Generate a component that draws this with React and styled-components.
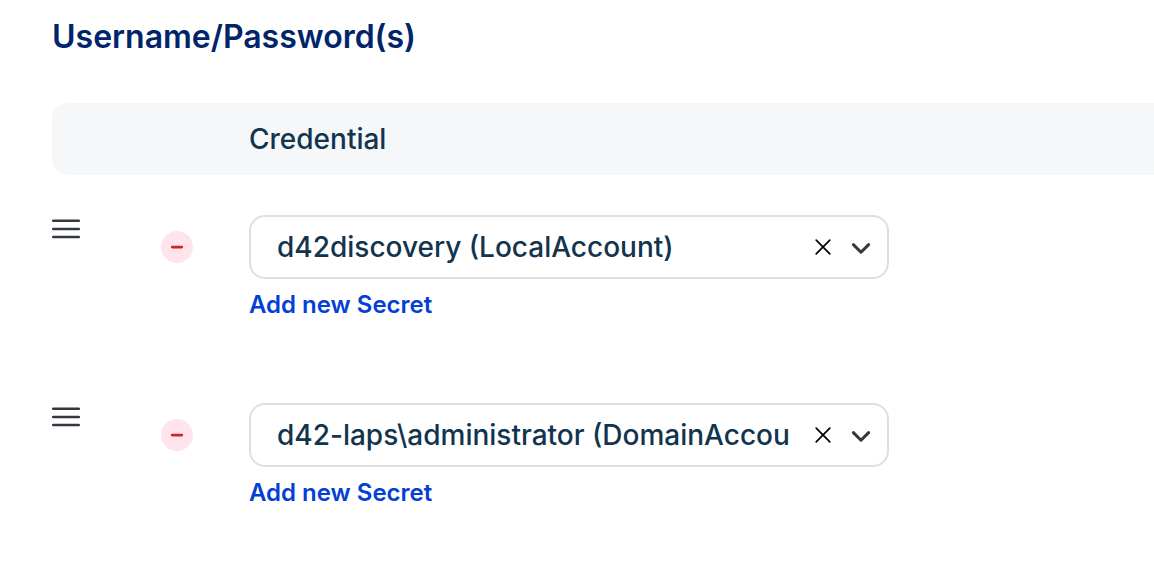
import React, { useRef, useState } from "react";
import styled, { createGlobalStyle } from "styled-components";

const GlobalStyle = createGlobalStyle`
  *,
  *::before,
  *::after {
    box-sizing: border-box;
  }

  body {
    margin: 0;
    background-color: #ffffff;
    color: #12344d;
    font-family: Inter, "Liberation Sans", sans-serif;
    font-size: 28px;
    line-height: 36px;
  }

  button,
  select {
    font: inherit;
    color: inherit;
  }
`;

const StyledSection = styled.section`
  padding: 17px 0 0 52px;
`;

const StyledTitle = styled.h2`
  margin: 0 0 46px;
  color: #00256c;
  font-size: 32px;
  font-weight: 600;
  font-optical-sizing: none;
  line-height: 40px;
`;

const StyledTable = styled.table`
  width: 100%;
  border-collapse: separate;
  border-spacing: 0;
  table-layout: fixed;

  .drag {
    width: 109px;
  }

  .remove {
    width: 88px;
  }
`;

const StyledHeadCell = styled.th`
  height: 72px;
  padding: 0;
  background-color: #f5f7f9;
  font-weight: 500;
  text-align: left;

  &:first-child {
    border-radius: 16px 0 0 16px;
  }
`;

const StyledCell = styled.td`
  height: 188px;
  padding: 40px 0 0;
  vertical-align: top;
`;

const StyledIconButton = styled.button`
  display: flex;
  align-items: center;
  justify-content: center;
  flex: none;
  width: ${({ $width }) => $width}px;
  height: ${({ $height }) => $height || 32}px;
  padding: 0;
  border: 0;
  background: none;
  cursor: pointer;
`;

const StyledRemoveButton = styled(StyledIconButton)`
  margin-top: 16px;
  border-radius: 50%;
  background-color: #ffe5eb;
`;

const StyledField = styled.div`
  display: flex;
  align-items: center;
  max-width: 640px;
  height: 64px;
  margin-bottom: 6px;
  padding: 0 4px 0 26px;
  border: 2px solid #dae0e7;
  border-radius: 16px;
`;

const StyledSelect = styled.select`
  flex: 1;
  min-width: 0;
  height: 100%;
  margin-right: 16px;
  padding: 0;
  border: 0;
  outline: 0;
  appearance: none;
  background: none;
  font-weight: 500;
`;

const StyledLink = styled.a`
  color: #0540d6;
  font-size: 24px;
  font-weight: 600;
  text-decoration: none;
`;

const MenuIcon = () => (
  <svg width="28" height="28" viewBox="0 0 28 28" fill="none" aria-hidden="true">
    <path
      d="M1.2 5.8H26.8M1.2 14H26.8M1.2 22.1H26.8"
      stroke="#33373f"
      strokeWidth="2.5"
      strokeLinecap="round"
    />
  </svg>
);

const MinusIcon = () => (
  <svg width="32" height="32" viewBox="0 0 32 32" fill="none" aria-hidden="true">
    <path d="M11.2 16.1H20.8" stroke="#d2232a" strokeWidth="2.8" strokeLinecap="round" />
  </svg>
);

const ClearIcon = () => (
  <svg width="20" height="20" viewBox="0 0 20 20" fill="none" aria-hidden="true">
    <path
      d="M3.2 3.2L16.8 16.8M16.8 3.2L3.2 16.8"
      stroke="#000000"
      strokeWidth="1.7"
      strokeLinecap="round"
    />
  </svg>
);

const ChevronIcon = () => (
  <svg width="24" height="24" viewBox="0 0 24 24" fill="none" aria-hidden="true">
    <path
      d="M4.4 9.6L12 17.2L19.6 9.6"
      stroke="#33373f"
      strokeWidth="3"
      strokeLinecap="round"
      strokeLinejoin="round"
    />
  </svg>
);

const secrets = [
  "d42discovery (LocalAccount)",
  "d42-laps\\administrator (DomainAccount)",
];

const CredentialRow = ({ id, initial, onRemove }) => {
  const [value, setValue] = useState(initial);
  const select = useRef(null);

  return (
    <tr>
      <StyledCell>
        <StyledIconButton type="button" aria-label="Reorder" $width={28} $height={28}>
          <MenuIcon />
        </StyledIconButton>
      </StyledCell>
      <StyledCell>
        <StyledRemoveButton type="button" aria-label="Remove" $width={32} onClick={onRemove}>
          <MinusIcon />
        </StyledRemoveButton>
      </StyledCell>
      <StyledCell>
        <StyledField>
          <StyledSelect
            id={id}
            ref={select}
            aria-labelledby="credential"
            value={value}
            onChange={(e) => setValue(e.target.value)}
          >
            <option value="" />
            {secrets.map((secret) => (
              <option key={secret} value={secret}>
                {secret}
              </option>
            ))}
          </StyledSelect>
          <StyledIconButton
            type="button"
            aria-label="Clear"
            $width={32}
            onClick={() => setValue("")}
          >
            <ClearIcon />
          </StyledIconButton>
          <StyledIconButton
            type="button"
            aria-label="Open list"
            $width={44}
            onClick={() => select.current.showPicker()}
          >
            <ChevronIcon />
          </StyledIconButton>
        </StyledField>
        <StyledLink href="#new-secret">Add new Secret</StyledLink>
      </StyledCell>
    </tr>
  );
};

const App = () => {
  const [rows, setRows] = useState(secrets);

  return (
    <>
      <GlobalStyle />
      <StyledSection>
        <StyledTitle>Username/Password(s)</StyledTitle>
        <StyledTable>
          <colgroup>
            <col className="drag" />
            <col className="remove" />
            <col />
          </colgroup>
          <thead>
            <tr>
              <StyledHeadCell />
              <StyledHeadCell />
              <StyledHeadCell id="credential" scope="col">
                Credential
              </StyledHeadCell>
            </tr>
          </thead>
          <tbody>
            {rows.map((row, i) => (
              <CredentialRow
                key={row}
                id={`credential-${i}`}
                initial={row}
                onRemove={() => setRows(rows.filter((r) => r !== row))}
              />
            ))}
          </tbody>
        </StyledTable>
      </StyledSection>
    </>
  );
};

export default App;
